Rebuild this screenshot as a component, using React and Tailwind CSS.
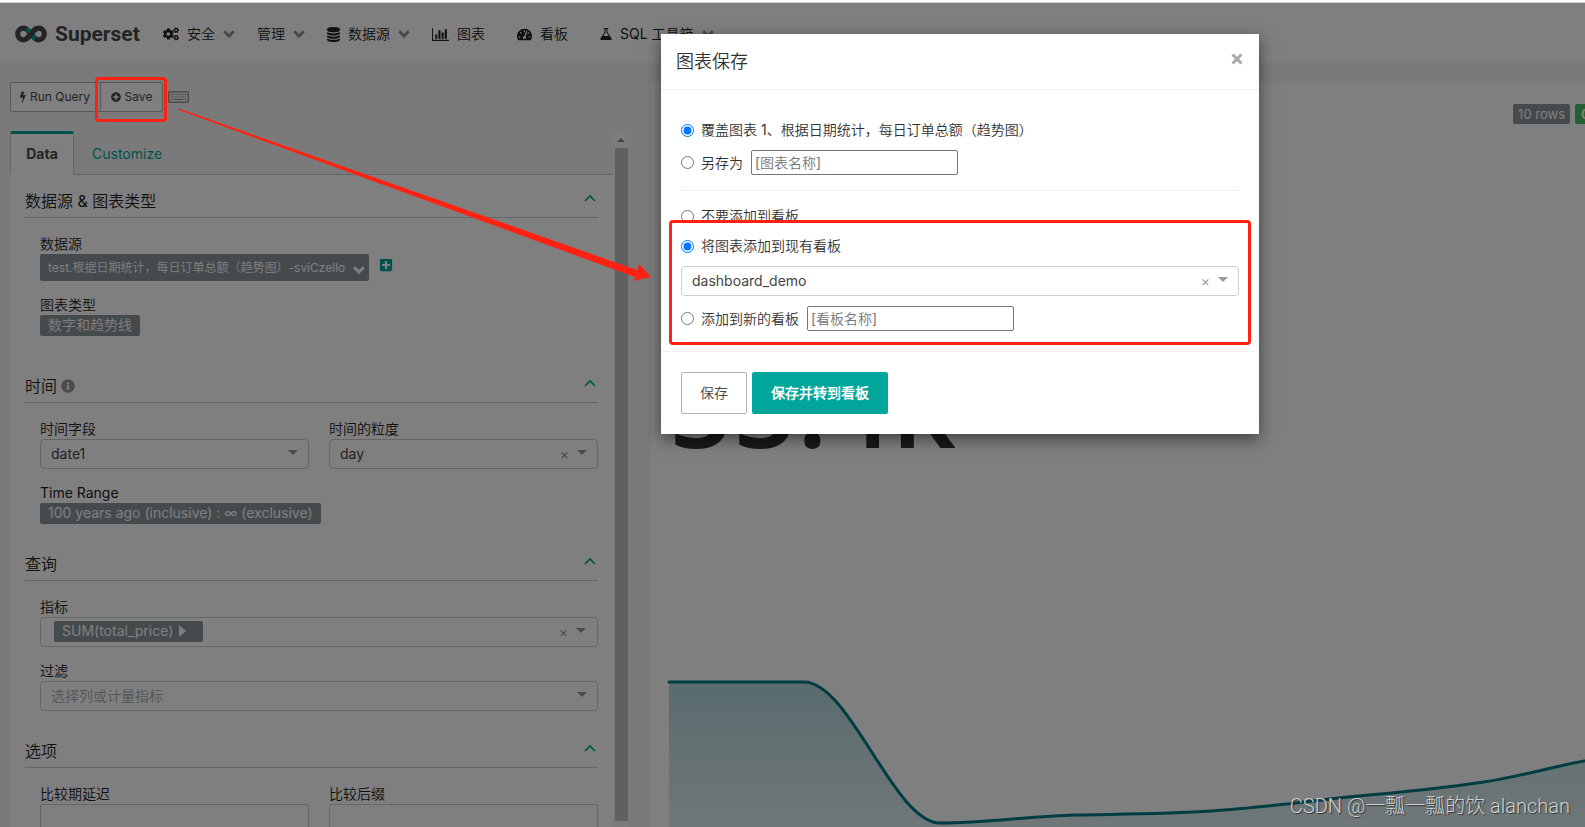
import { useState } from 'react';
import { FaCogs, FaInfoCircle, FaPlusCircle, FaPlusSquare, FaTachometerAlt } from 'react-icons/fa';

const GLYPHS = {
  bolt: {
    box: '0 0 896 1792',
    d: 'M885 566q18 20 7 44l-540 1157q-13 25-42 25-4 0-14-2-17-5-25.5-19t-4.5-30l197-808-406 101q-4 1-12 1-18 0-31-11-18-15-13-39l201-825q4-16 18-26t33-10h328q19 0 32 12.5t13 29.5q0 8-5 18l-171 463 396-98q8-2 12-2 19 0 34 15z',
  },
  bars: {
    box: '0 0 2048 1792',
    d: 'M640 896v512h-256v-512h256zm384-512v1024h-256v-1024h256zm1024 1152v128h-2048v-1536h128v1408h1920zm-640-896v768h-256v-768h256zm384-384v1152h-256v-1152h256z',
  },
  database: {
    box: '0 0 1536 1792',
    d: 'M768 768q237 0 443-43t325-127v170q0 69-103 128t-280 93.5-385 34.5-385-34.5-280-93.5-103-128v-170q119 84 325 127t443 43zm0 768q237 0 443-43t325-127v170q0 69-103 128t-280 93.5-385 34.5-385-34.5-280-93.5-103-128v-170q119 84 325 127t443 43zm0-384q237 0 443-43t325-127v170q0 69-103 128t-280 93.5-385 34.5-385-34.5-280-93.5-103-128v-170q119 84 325 127t443 43zm0-1152q208 0 385 34.5t280 93.5 103 128v128q0 69-103 128t-280 93.5-385 34.5-385-34.5-280-93.5-103-128v-128q0-69 103-128t280-93.5 385-34.5z',
  },
  flask: {
    box: '64 0 1536 1792',
    d: 'M1527 1447q56 89 21.5 153t-140.5 64h-1152q-106 0-140.5-64t21.5-153l503-793v-399h-64q-26 0-45-19t-19-45 19-45 45-19h512q26 0 45 19t19 45-19 45-45 19h-64v399zm-779-725l-272 430h712l-272-430-20-31v-436h-128v436z',
  },
};

function Glyph({ name, className }) {
  const glyph = GLYPHS[name];
  return (
    <svg viewBox={glyph.box} className={className} fill="currentColor" aria-hidden="true">
      <path d={glyph.d} />
    </svg>
  );
}

function Chevron({ className }) {
  return (
    <svg viewBox="0 0 12 8" className={className} fill="none" stroke="currentColor" strokeWidth="3" aria-hidden="true">
      <path d="M1.2 1.2 6 6l4.8-4.8" />
    </svg>
  );
}

function Logo() {
  return (
    <svg viewBox="0 0 32 18" className="h-[18px] w-8" fill="none" strokeWidth="5.2" aria-hidden="true">
      <path d="M16 9C13 5.500 11.500 3.200 8.500 3.200a5.800 5.800 0 0 0 0 11.600C11.500 14.800 13 12.500 16 9" stroke="#484848" />
      <path d="M16 9c3-3.500 4.500-5.800 7.500-5.800a5.800 5.800 0 0 1 0 11.600C20.500 14.800 19 12.500 16 9" stroke="#484848" />
      <path d="M11.600 4.300C13.400 5.600 14.600 7.400 16 9s2.600 3.400 4.400 4.700" stroke="#00A699" />
      <path d="M11 14.200c2-1.300 3.500-3.400 5-5.200s3-3.900 5-5.200" stroke="#484848" />
    </svg>
  );
}

function KeyboardIcon() {
  return (
    <svg viewBox="0 0 21 12" className="h-3 w-[21px]" fill="none" stroke="#999" aria-hidden="true">
      <rect x="0.75" y="0.75" width="19.500" height="10.500" rx="0.800" strokeWidth="1.500" />
      <path d="M3 3.500h15M3 5.800h15" strokeWidth="1.300" strokeDasharray="1.300 1" />
      <path d="M3 8.400h1.500M5.600 8.400h9.800M16.500 8.400H18" strokeWidth="1.300" />
    </svg>
  );
}

const NAV = [
  { label: '安全', icon: <FaCogs className="size-4" />, menu: true },
  { label: '管理', menu: true },
  { label: '数据源', icon: <Glyph name="database" className="h-[15px] w-[13px]" />, menu: true },
  { label: '图表', icon: <Glyph name="bars" className="h-[15px] w-[17px]" /> },
  { label: '看板', icon: <FaTachometerAlt className="size-[15px]" /> },
  { label: 'SQL 工具箱', icon: <Glyph name="flask" className="h-[14px] w-3" />, menu: true },
];

function Navbar() {
  return (
    <header className="flex h-[60px] shrink-0 items-center bg-white pt-[2px] pl-[15px]">
      <a href="#home" className="flex w-[148px] shrink-0 items-center gap-2">
        <Logo />
        <span className="font-[Roboto] text-[21px] leading-6 font-bold text-[#484848]">Superset</span>
      </a>
      <nav className="flex items-center text-sm text-[#222]">
        {NAV.map((item) => (
          <a
            key={item.label}
            href="#nav"
            className={`flex shrink-0 items-center gap-2 ${item.menu ? 'mr-[22px]' : 'mr-8'}`}
          >
            {item.icon}
            <span className="whitespace-nowrap">{item.label}</span>
            {item.menu && <Chevron className="h-2 w-3 text-[#8d959d]" />}
          </a>
        ))}
      </nav>
    </header>
  );
}

function Caret() {
  return (
    <svg viewBox="0 0 10 5" className="h-[5px] w-[10px]" fill="#999" aria-hidden="true">
      <path d="M0 0h10L5 5z" />
    </svg>
  );
}

function SelectAddons({ clearable }) {
  return (
    <div className="pointer-events-none absolute inset-y-0 right-[11px] flex items-center gap-2 pb-1">
      {clearable && <span className="pt-1 text-[14px] leading-none text-[#999]">×</span>}
      <Caret />
    </div>
  );
}

function Select({ id, options, clearable, placeholder, label }) {
  return (
    <div className="relative">
      <select
        id={id}
        aria-label={label}
        className={`block h-[30px] w-full appearance-none rounded border border-[#ccc] bg-white px-[10px] text-sm leading-5 ${
          placeholder ? 'text-[#aaa]' : 'text-[#444]'
        }`}
      >
        {options.map((o) => (
          <option key={o}>{o}</option>
        ))}
      </select>
      <SelectAddons clearable={clearable} />
    </div>
  );
}

function Field({ id, label, children }) {
  return (
    <div className="min-w-0 flex-1">
      <label htmlFor={id} className="block text-sm leading-5 text-[#222]">
        {label}
      </label>
      {children}
    </div>
  );
}

function Section({ title, info, children }) {
  return (
    <section>
      <div className="flex h-[29px] items-start justify-between border-b border-[#ccc]">
        <h2 className="flex items-center gap-1 text-base leading-6 text-[#222]">
          {title}
          {info && <FaInfoCircle className="size-[14px] text-[#999]" />}
        </h2>
        <button type="button" aria-label={title} className="mr-[2px] p-0">
          <svg viewBox="0 0 12 8" className="mt-[5px] h-2 w-3" fill="none" stroke="#00A699" strokeWidth="1.600">
            <path d="M1 7l5-5 5 5" />
          </svg>
        </button>
      </div>
      <div className="flex flex-col gap-[14px] pt-4 pl-[15px]">{children}</div>
    </section>
  );
}

function Tag({ id, children }) {
  return (
    <button
      id={id}
      type="button"
      className="block h-[21px] rounded-xs bg-[#8a949b] px-2 pb-px text-sm leading-5 whitespace-nowrap text-white"
    >
      {children}
    </button>
  );
}

function ControlPanel() {
  return (
    <div className="flex min-h-0 flex-1">
      <div className="flex min-w-0 flex-1 flex-col">
        <div className="flex h-11 shrink-0 border-b border-[#ccc]" role="tablist">
          <button
            type="button"
            role="tab"
            className="mr-[2px] h-11 w-16 rounded-t-xs border border-t-3 border-[#ccc] border-t-[#00A699] border-b-white bg-white text-sm font-bold text-[#484848]"
          >
            Data
          </button>
          <button type="button" role="tab" className="px-4 pt-[2px] text-sm text-[#00A699]">
            Customize
          </button>
        </div>
        <div className="flex min-h-0 flex-1 flex-col gap-7 overflow-hidden bg-white px-[15px] pt-[14px]">
          <Section title="数据源 & 图表类型">
            <Field id="datasource" label="数据源">
              <div className="flex gap-[10px]">
                <button
                  id="datasource"
                  type="button"
                  className="flex h-[27px] items-center gap-2 rounded-xs bg-[#8a949b] pr-1 pl-2 text-xs whitespace-nowrap text-white"
                >
                  test.根据日期统计，每日订单总额（趋势图）-sviCzello
                  <Chevron className="mt-1 h-2 w-3" />
                </button>
                <button type="button" aria-label="add" className="mt-1 h-[14px] text-[#00A699]">
                  <FaPlusSquare className="size-[14px]" />
                </button>
              </div>
            </Field>
            <div className="pb-[10px]">
              <Field id="viz" label="图表类型">
                <Tag id="viz">数字和趋势线</Tag>
              </Field>
            </div>
          </Section>
          <Section title="时间" info>
            <div className="flex gap-5">
              <Field id="column" label="时间字段">
                <Select id="column" options={['date1']} />
              </Field>
              <Field id="grain" label="时间的粒度">
                <Select id="grain" options={['day']} clearable />
              </Field>
            </div>
            <Field id="range" label="Time Range">
              <Tag id="range">100 years ago (inclusive) : ∞ (exclusive)</Tag>
            </Field>
          </Section>
          <Section title="查询">
            <Field id="metric" label="指标">
              <div className="relative flex h-[30px] items-start rounded border border-[#ccc] bg-white pt-[3px] pl-[13px]">
                <button
                  id="metric"
                  type="button"
                  className="flex h-[21px] w-[149px] items-center gap-[6px] rounded-xs bg-[#8a949b] px-2 pb-px text-sm text-white"
                >
                  SUM(total_price)
                  <svg viewBox="0 0 7 12" className="h-3 w-[7px]" fill="currentColor" aria-hidden="true">
                    <path d="M0 0l7 6-7 6z" />
                  </svg>
                </button>
                <SelectAddons clearable />
              </div>
            </Field>
            <Field id="filter" label="过滤">
              <Select id="filter" options={['选择列或计量指标']} placeholder />
            </Field>
          </Section>
          <Section title="选项">
            <div className="flex gap-5">
              <Field id="lag" label="比较期延迟">
                <input id="lag" className="block h-[30px] w-full rounded-xs border border-[#ccc] bg-white px-2 text-sm" />
              </Field>
              <Field id="suffix" label="比较后缀">
                <input id="suffix" className="block h-[30px] w-full rounded-xs border border-[#ccc] bg-white px-2 text-sm" />
              </Field>
            </div>
          </Section>
        </div>
      </div>
      {/* scrollbar */}
      <div className="flex w-4 flex-col items-center bg-[#f9f9f9] pb-[6px]">
        <svg viewBox="0 0 8 4" className="mt-[7px] mb-[6px] h-1 w-2" fill="#888" aria-hidden="true">
          <path d="M0 4l4-4 4 4z" />
        </svg>
        <div className="w-[13px] flex-1 bg-[#c1c1c1]" />
      </div>
    </div>
  );
}

const TREND = 'M2 10H137C183 10 227 151 273 151C319 151 363 144 409 143C455 142 499 142 545 139C591 136 635 130 681 125C727 121 771 117 817 110C863 103 907 88 953 83';

function ChartPanel() {
  return (
    <main className="ml-[21px] flex min-w-0 flex-1 flex-col overflow-hidden border-l border-[#f0f0f0] bg-white">
      <div className="mt-[22px] flex justify-end gap-[5px] text-[13px] leading-5 whitespace-nowrap text-white">
        <span className="rounded-xs bg-[#8a949b] px-[5px]">10 rows</span>
        <span className="-mr-12 w-[58px] rounded-xs bg-[#4ac15f] pl-[6px] font-bold">00:00:00</span>
      </div>
      <div className="mt-[211px] pl-[18px] font-['Open_Sans'] text-[112px] leading-[140px] font-semibold text-[#333]">55.4k</div>
      <div className="mt-auto h-[155px] pl-4">
        <svg viewBox="0 0 953 155" className="h-[155px] w-[953px] max-w-none" fill="none" role="img" aria-label="trend">
          <defs>
            <linearGradient id="area" x1="0" y1="10" x2="0" y2="190" gradientUnits="userSpaceOnUse">
              <stop offset="0" stopColor="#007A87" stopOpacity="0.300" />
              <stop offset="1" stopColor="#007A87" stopOpacity="0.080" />
            </linearGradient>
          </defs>
          <path d={`${TREND}V155H2Z`} fill="url(#area)" />
          <path d={TREND} stroke="#007A87" strokeWidth="3" strokeLinecap="round" />
        </svg>
      </div>
    </main>
  );
}

function Radio({ id, name, checked, onChange, label }) {
  return (
    <label htmlFor={id} className="flex items-center gap-[7px] whitespace-nowrap">
      <input id={id} name={name} type="radio" checked={checked} onChange={onChange} className="size-[13px]" />
      {label}
    </label>
  );
}

function SaveModal() {
  const [action, setAction] = useState('overwrite');
  const [target, setTarget] = useState('existing');
  const inputClass =
    'h-[25px] w-[207px] rounded-xs border border-[#767676] bg-white px-[3px] text-sm placeholder:text-[#757575]';

  return (
    <div
      role="dialog"
      aria-label="图表保存"
      className="absolute top-[34px] left-[661px] w-[598px] bg-white text-sm leading-5 text-[#333] shadow-[0_5px_15px_rgba(0,0,0,0.5)]"
    >
      <div className="flex h-14 items-center justify-between border-b border-[#eee] pr-4 pl-[15px]">
        <h4 className="text-lg">图表保存</h4>
        <button type="button" aria-label="close" className="mb-[6px] p-0 text-[#aaa]">
          <svg viewBox="0 0 12 12" className="size-3" fill="none" stroke="currentColor" strokeWidth="3">
            <path d="M1.500 1.500l9 9M10.500 1.500l-9 9" />
          </svg>
        </button>
      </div>
      <div className="px-5 pt-[30px] pb-5">
        <Radio
          id="overwrite"
          name="action"
          checked={action === 'overwrite'}
          onChange={() => setAction('overwrite')}
          label="覆盖图表 1、根据日期统计，每日订单总额（趋势图）"
        />
        <div className="mt-[10px] flex items-center gap-2">
          <Radio id="saveas" name="action" checked={action === 'saveas'} onChange={() => setAction('saveas')} label="另存为" />
          <input aria-label="图表名称" placeholder="[图表名称]" className={inputClass} />
        </div>
        <hr className="my-[15px] border-[#eee]" />
        <Radio id="none" name="target" checked={target === 'none'} onChange={() => setTarget('none')} label="不要添加到看板" />
        <div className="mt-[10px]">
          <Radio
            id="existing"
            name="target"
            checked={target === 'existing'}
            onChange={() => setTarget('existing')}
            label="将图表添加到现有看板"
          />
        </div>
        <div className="my-[10px]">
          <Select label="看板" options={['dashboard_demo']} clearable />
        </div>
        <div className="flex items-center gap-2">
          <Radio id="new" name="target" checked={target === 'new'} onChange={() => setTarget('new')} label="添加到新的看板" />
          <input aria-label="看板名称" placeholder="[看板名称]" className={inputClass} />
        </div>
      </div>
      <div className="flex gap-[5px] border-t border-[#f2f2f2] p-5">
        <button type="button" className="h-[42px] rounded-xs border border-[#b3b3b3] bg-white px-[18px] text-[#484848]">
          保存
        </button>
        <button type="button" className="h-[42px] rounded-xs bg-[#00A699] px-[19px] font-bold text-white">
          保存并转到看板
        </button>
      </div>
    </div>
  );
}

// red markers that walk the reader from the Save button to the dialog
function Annotations() {
  return (
    <div className="pointer-events-none absolute inset-0 overflow-hidden">
      <div className="absolute top-[77px] left-[95px] h-[45px] w-[72px] rounded border-3 border-[#ff2213]" />
      <div className="absolute top-[220px] left-[669px] h-[125px] w-[582px] rounded border-3 border-[#ff2213]" />
      <svg viewBox="0 0 480 180" className="absolute top-[105px] left-[175px] h-[180px] w-[480px]" fill="#ff2213" aria-hidden="true">
        <path d="M4 3.500 462 165 464 159 476 172 458 176 461 172.500 4 5z" />
      </svg>
      <p className="absolute right-[15px] bottom-[7px] font-[Roboto,'Noto_Sans_CJK_SC',sans-serif] text-[20px] leading-7 font-light whitespace-nowrap text-[#d0d0d0] [text-shadow:1px_1px_1px_#333]">
        CSDN @一瓢一瓢的饮 alanchan
      </p>
    </div>
  );
}

export default function App() {
  return (
    <div className="relative flex h-screen flex-col overflow-hidden border-t-2 border-white bg-[#f5f5f5] font-[Inter,'Noto_Sans_CJK_SC_DemiLight','Noto_Sans_CJK_SC_Light','Noto_Sans_CJK_SC',sans-serif]">
      <div className="h-px shrink-0 bg-[#ccc]" />
      <Navbar />
      <div className="flex min-h-0 flex-1 pt-[19px]">
        <div className="ml-[10px] flex w-[619px] shrink-0 flex-col">
          <div className="mb-[19px] flex h-[30px] shrink-0 items-center text-xs text-[#484848]">
            <button type="button" className="flex h-[30px] w-[90px] items-center gap-1 rounded-l-xs border border-r-0 border-[#b3b3b3] bg-white pl-[9px] whitespace-nowrap">
              <Glyph name="bolt" className="h-3 w-[6px]" />
              Run Query
            </button>
            <button type="button" className="mr-[5px] flex h-[30px] w-[63px] items-center justify-center gap-1 rounded-r-xs border border-[#b3b3b3] bg-white">
              <FaPlusCircle className="size-[10px]" />
              Save
            </button>
            <KeyboardIcon />
          </div>
          <ControlPanel />
        </div>
        <ChartPanel />
      </div>
      <div className="absolute inset-x-0 top-px bottom-0 bg-black/50" />
      <div className="absolute inset-x-0 -top-[2px] bottom-0">
        <SaveModal />
        <Annotations />
      </div>
    </div>
  );
}
